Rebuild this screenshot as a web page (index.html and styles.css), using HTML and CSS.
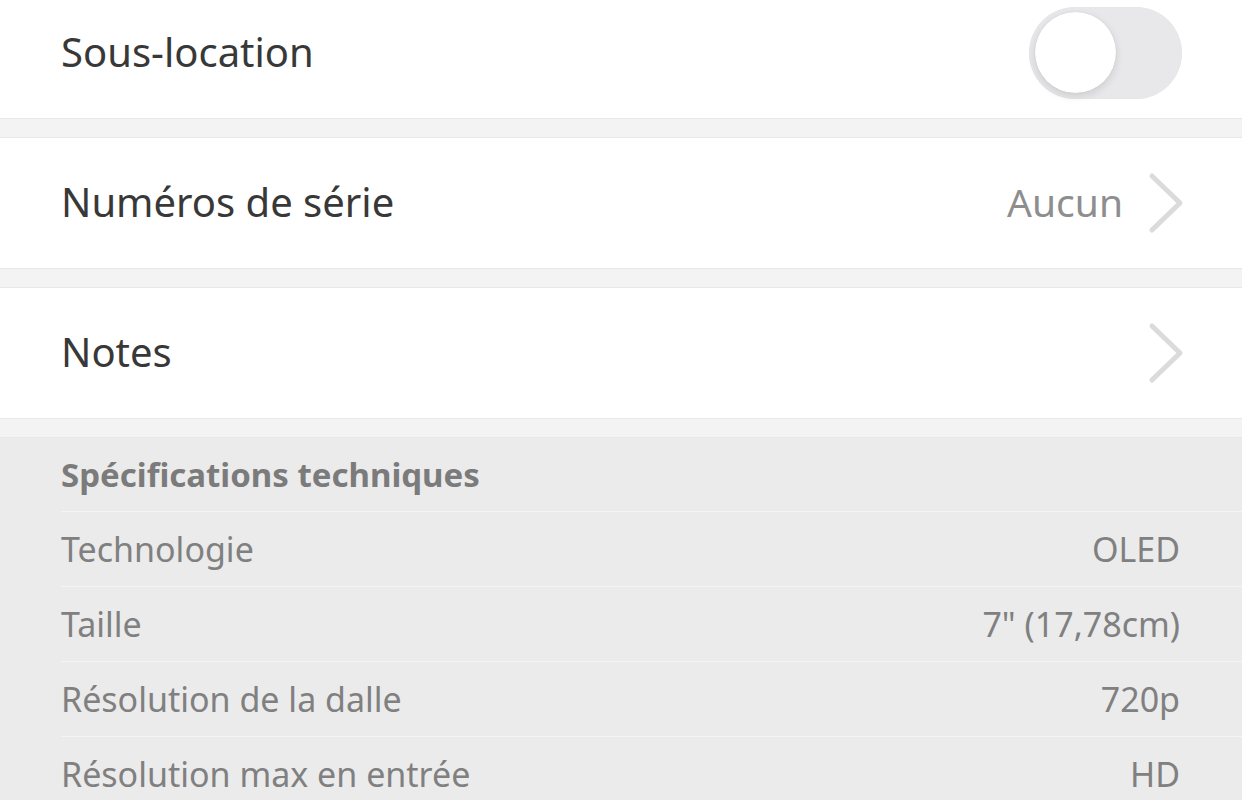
FILE: index.html
```html
<!DOCTYPE html>
<html lang="fr">
<head>
    <meta charset="UTF-8">
    <meta name="viewport" content="width=device-width, initial-scale=1.0">
    <title>Détails de l'appareil</title>
    <link rel="stylesheet" href="styles.css">
</head>
<body>
    <div class="settings">
        <div class="row first">
            <span class="label">Sous-location</span>
            <span class="switch"><span class="knob"></span></span>
        </div>
        <div class="gap"></div>
        <div class="row">
            <span class="label">Numéros de série</span>
            <span class="right">
                <span class="value">Aucun</span>
                <svg class="chevron" width="36" height="62" viewBox="0 0 36 62"><polyline points="4,4 32,31 4,58" /></svg>
            </span>
        </div>
        <div class="gap"></div>
        <div class="row">
            <span class="label">Notes</span>
            <span class="right">
                <svg class="chevron" width="36" height="62" viewBox="0 0 36 62"><polyline points="4,4 32,31 4,58" /></svg>
            </span>
        </div>
        <div class="gap"></div>

        <section class="specs">
            <h3>Spécifications techniques</h3>
            <div class="spec"><span>Technologie</span><span>OLED</span></div>
            <div class="spec"><span>Taille</span><span>7" (17,78cm)</span></div>
            <div class="spec"><span>Résolution de la dalle</span><span>720p</span></div>
            <div class="spec"><span>Résolution max en entrée</span><span>HD</span></div>
        </section>
    </div>
</body>
</html>
```

FILE: styles.css
```css
body {
    margin: 0;
    font-family: "Noto Sans", "Open Sans", sans-serif;
    background: #ebebeb;
    overflow: hidden;
}
.settings {
    width: 1242px;
}
.row {
    height: 130px;
    background: white;
    display: flex;
    align-items: center;
    justify-content: space-between;
    padding: 0 60px 0 61px;
    box-sizing: border-box;
}
.row.first {
    margin-top: -12px;
}
.label {
    font-size: 40px;
    color: #383838;
    margin-top: -3px;
}
.right {
    display: flex;
    align-items: center;
    gap: 25px;
}
.value {
    font-size: 39px;
    color: #8e8e8e;
    margin-top: -3px;
}
.chevron {
    margin-right: -2px;
}
.chevron polyline {
    fill: none;
    stroke: #dbdbdb;
    stroke-width: 5;
    stroke-linecap: round;
    stroke-linejoin: round;
}
.switch {
    width: 153px;
    height: 92px;
    border-radius: 46px;
    background: #e8e8ea;
    position: relative;
    box-shadow: inset 0 0 1px rgba(0, 0, 0, 0.08);
}
.knob {
    position: absolute;
    left: 6px;
    top: 5px;
    width: 81px;
    height: 81px;
    border-radius: 50%;
    background: white;
    box-shadow: 0 3px 8px rgba(0, 0, 0, 0.12), 0 0 1px rgba(0, 0, 0, 0.15);
}
.gap {
    height: 18px;
    background: #f3f3f3;
    border-top: 1px solid #e8e8e8;
    border-bottom: 1px solid #e8e8e8;
}
.specs {
    background: #ebebeb;
    padding-left: 61px;
}
.specs h3 {
    margin: 0;
    height: 73px;
    display: flex;
    align-items: center;
    font-size: 33px;
    font-weight: bold;
    color: #7b7b7b;
}
.spec {
    height: 75px;
    border-top: 1px solid #f4f4f4;
    display: flex;
    align-items: center;
    justify-content: space-between;
    padding-right: 62px;
    box-sizing: border-box;
    font-size: 34px;
    color: #808080;
}
```
